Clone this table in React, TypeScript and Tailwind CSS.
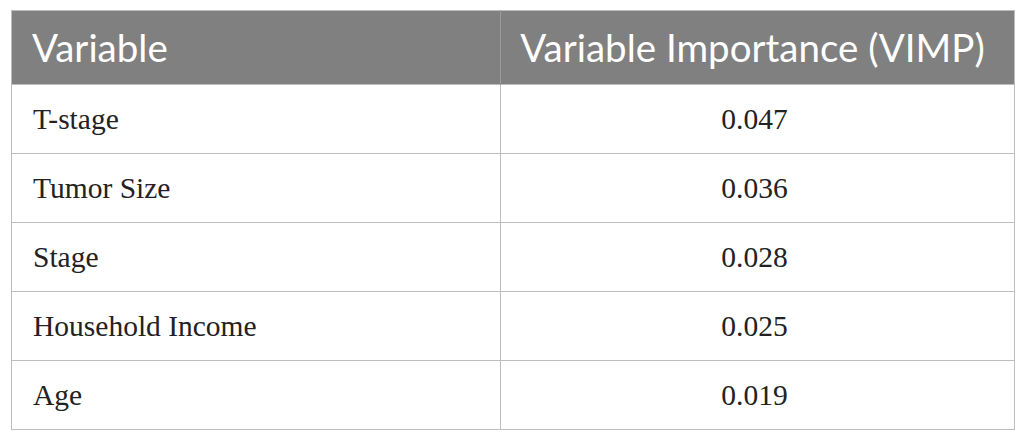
const ROWS: [string, string][] = [
  ["T-stage", "0.047"],
  ["Tumor Size", "0.036"],
  ["Stage", "0.028"],
  ["Household Income", "0.025"],
  ["Age", "0.019"],
];

export default function App() {
  return (
    <div className="h-[441px] w-[1026px] bg-white pl-[11px] pt-[10px]">
      <table className="w-[1004px] table-fixed border-collapse border border-[#bdbdbd]">
        <colgroup>
          <col className="w-[489px]" />
          <col />
        </colgroup>
        <thead>
          <tr className="h-[74px] bg-[#808080] font-['Lato',sans-serif] text-[38.5px] text-white">
            <th className="border-r border-[#9a9a9a] pl-[20px] text-left font-normal">
              Variable
            </th>
            <th className="pr-[10px] text-center font-normal">Variable Importance (VIMP)</th>
          </tr>
        </thead>
        <tbody className="font-['Liberation_Serif',serif] text-[29.5px] text-[#222]">
          {ROWS.map(([name, value]) => (
            <tr key={name} className="h-[69px] border-t border-[#bdbdbd]">
              <td className="border-r border-[#bdbdbd] pl-[21px]">{name}</td>
              <td className="pr-[6px] text-center">{value}</td>
            </tr>
          ))}
        </tbody>
      </table>
    </div>
  );
}
